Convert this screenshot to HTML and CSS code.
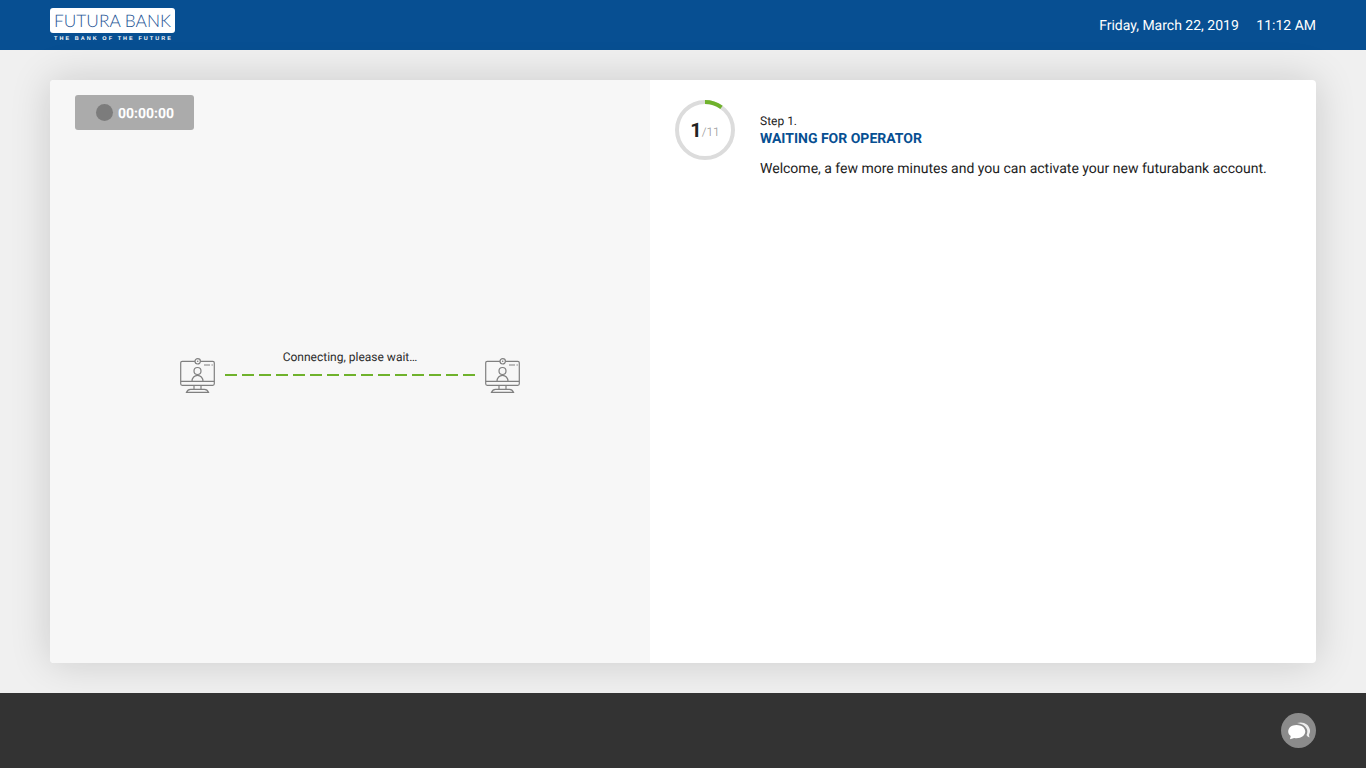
FILE: index.html
```html
<!DOCTYPE html>
<html lang="en">
<head>
<meta charset="utf-8">
<title>Futura Bank</title>
<link rel="stylesheet" href="styles.css">
</head>
<body>
<svg class="defs" width="0" height="0" aria-hidden="true">
  <symbol id="pc" viewBox="0 0 35 35">
    <g fill="none" stroke="#808080" stroke-width="1.2">
      <rect x=".7" y="3.300" width="33.600" height="24" rx="1.500"/>
      <circle cx="17.700" cy="3.300" r="2.700" fill="#f7f7f7"/>
      <circle cx="17.700" cy="3.300" r=".8" fill="#808080" stroke="none"/>
      <path d="M.7 23.300h33.600"/>
      <circle cx="17.500" cy="13" r="3.500"/>
      <path d="M12 23.300c0-3.500 2.500-6 5.500-6s5.500 2.500 5.500 6"/>
      <path d="M24 7h6M31.500 7h1.300"/>
      <path d="M14 27.300v4M21 27.300v4"/>
      <path d="M6.500 34.300c.8-2 2-3 4-3h14c2 0 3.200 1 4 3z"/>
    </g>
  </symbol>
</svg>
<header class="topbar">
  <div class="logo">
    <div class="logo-box">FUTURA BANK</div>
    <div class="logo-tag">THE BANK OF THE FUTURE</div>
  </div>
  <div class="clock">
    <span>Friday, March 22, 2019</span>
    <span>11:12 AM</span>
  </div>
</header>
<main class="content">
  <section class="card">
    <div class="video-panel">
      <div class="timer"><span class="rec-dot"></span><span>00:00:00</span></div>
      <div class="connection">
        <svg class="pc-icon"><use href="#pc"/></svg>
        <div class="link">
          <div class="link-text">Connecting, please wait…</div>
          <div class="dash-line"></div>
        </div>
        <svg class="pc-icon"><use href="#pc"/></svg>
      </div>
    </div>
    <div class="step-panel">
      <div class="progress">
        <svg class="ring" viewBox="0 0 60 60" aria-hidden="true">
          <circle cx="30" cy="30" r="28" fill="none" stroke="#dcdcdc" stroke-width="4"/>
          <path d="M30 2A28 28 0 0 1 46.500 7.400" fill="none" stroke="#6fb22c" stroke-width="4"/>
        </svg>
        <div class="count"><b>1</b><span>/11</span></div>
      </div>
      <div class="step-info">
        <div class="step-no">Step 1.</div>
        <h1 class="step-title">WAITING FOR OPERATOR</h1>
        <p class="step-desc">Welcome, a few more minutes and you can activate your new futurabank account.</p>
      </div>
    </div>
  </section>
</main>
<footer class="bottombar">
  <button class="chat" aria-label="Chat">
    <svg viewBox="0 0 35 35" width="35" height="35" aria-hidden="true">
      <path d="M16 10c6-2 12 1 13 7 .3 2-.5 3.500-1 5l.5 2.500c-1.500-.5-2.500-1.500-3-2.500 1-2 1.200-4.500 0-6.500-1.500-3-5-5-9.500-5.500z" fill="#fff" fill-opacity=".85"/>
      <path d="M15.500 12c5 0 8.800 2.800 8.800 6.500s-3.800 6.700-8.800 6.700c-.8 0-1.600-.1-2.300-.2L9 26.300l.7-3.300C8 21.800 7.200 20.200 7.200 18.500c0-3.700 3.300-6.500 8.300-6.500z" fill="#fff"/>
    </svg>
  </button>
</footer>
</body>
</html>
```
FILE: styles.css
```css
* { box-sizing: border-box; }
html, body { height: 100%; }
body {
  margin: 0;
  height: 768px;
  display: flex;
  flex-direction: column;
  overflow: hidden;
  font-family: Roboto, "Liberation Sans", sans-serif;
  text-rendering: geometricPrecision;
  color: #222;
  background: #f0f0f0;
}
.defs { position: absolute; }
.topbar {
  height: 50px;
  flex: none;
  background: #074f92;
  color: #fff;
  display: flex;
  align-items: center;
  justify-content: space-between;
  padding: 0 50px;
}
.logo {
  display: flex;
  flex-direction: column;
  align-items: center;
  width: 125px;
  padding-top: 1px;
}
.logo-box {
  width: 125px;
  height: 25px;
  background: #fff;
  border-radius: 3px;
  color: #1d5495;
  font-family: Lato, "Liberation Sans", sans-serif;
  font-size: 17.300px;
  font-weight: 300;
  line-height: 25px;
  text-align: center;
  white-space: nowrap;
}
.logo-tag {
  margin-top: 2px;
  padding-left: 2px;
  font-family: "Liberation Sans", sans-serif;
  font-size: 5.500px;
  font-weight: 700;
  line-height: 8px;
  letter-spacing: 2.050px;
  white-space: nowrap;
}
.clock {
  display: flex;
  gap: 17.500px;
  padding-top: 1px;
  font-size: 14px;
  line-height: 20px;
}
.content {
  flex: 1;
  padding: 30px 50px;
  min-height: 0;
}
.card {
  height: 583px;
  display: flex;
  background: #fff;
  border-radius: 4px;
  overflow: hidden;
  box-shadow: 0 0 40px rgba(0, 0, 0, .16);
}
.video-panel {
  width: 600px;
  flex: none;
  background: #f7f7f7;
  padding: 15px 25px;
  display: flex;
  flex-direction: column;
}
.timer {
  width: 119px;
  height: 35px;
  padding: 2px 0 0 1px;
  background: #ababab;
  border-radius: 3px;
  color: #fff;
  font-size: 14px;
  font-weight: 700;
  display: flex;
  align-items: center;
  justify-content: center;
  gap: 5px;
}
.rec-dot {
  width: 17px;
  height: 17px;
  margin-top: -2px;
  border-radius: 50%;
  background: #7c7c7c;
}
.connection {
  margin-top: 228px;
  margin-left: 105px;
  display: flex;
  gap: 10px;
  align-items: flex-start;
}
.pc-icon {
  width: 35px;
  height: 35px;
  flex: none;
}
.link {
  width: 250px;
  margin-top: -8px;
}
.link-text {
  font-size: 12px;
  line-height: 14px;
  text-align: center;
  color: #2b2b2b;
  height: 24px;
}
.dash-line {
  height: 2px;
  background: repeating-linear-gradient(90deg, #6fb22c 0 12px, transparent 12px 17px);
}
.step-panel {
  flex: 1;
  padding: 20px 25px;
  display: flex;
  gap: 25px;
  align-items: flex-start;
}
.progress {
  width: 60px;
  height: 60px;
  flex: none;
  position: relative;
}
.ring {
  display: block;
  width: 60px;
  height: 60px;
}
.count {
  position: absolute;
  inset: 0;
  padding-top: 18px;
  text-align: center;
  color: #8d8d8d;
  font-size: 12px;
  font-weight: 300;
  line-height: 24px;
}
.count b {
  color: #222;
  font-size: 20px;
  font-weight: 700;
}
.count span {
  vertical-align: 1px;
}
.step-info { padding-top: 14px; }
.step-no {
  font-size: 12px;
  line-height: 14px;
}
.step-title {
  margin: 2px 0 0;
  font-size: 14px;
  line-height: 18px;
  font-weight: 700;
  color: #074f92;
}
.step-desc {
  margin: 11px 0 0;
  font-size: 14px;
  line-height: 20px;
}
.bottombar {
  height: 75px;
  flex: none;
  background: #333;
  display: flex;
  align-items: center;
  justify-content: flex-end;
  padding: 0 50px;
}
.chat {
  width: 35px;
  height: 35px;
  padding: 0;
  border: 0;
  border-radius: 50%;
  background: #8b8b8b;
  display: block;
}
.chat svg { display: block; }
```
